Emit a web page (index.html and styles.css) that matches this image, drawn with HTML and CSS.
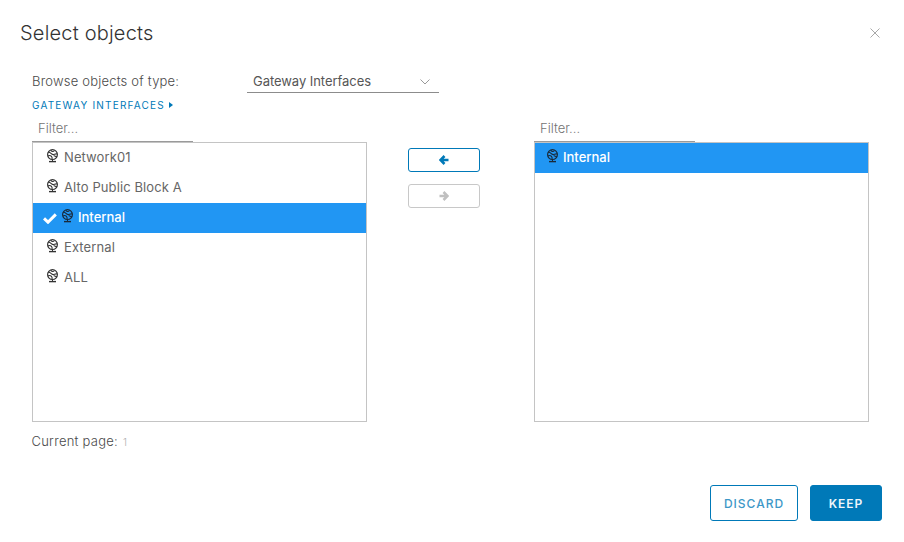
FILE: index.html
```html
<!DOCTYPE html>
<html lang="en">
<head>
<meta charset="utf-8">
<title>Select objects</title>
<link rel="stylesheet" href="styles.css">
</head>
<body>
<svg class="defs" width="0" height="0" aria-hidden="true">
  <symbol id="globe" viewBox="0 0 13 14">
    <circle cx="6.5" cy="5.6" r="4.9" fill="none" stroke="currentColor" stroke-width="1.2"/>
    <path d="M2.2 3.4 C4.2 2.8 5 5 6.5 5.4 C8 5.8 9.4 4.4 11 5 M5 1 C5 3 7.6 3 8.4 1.4 M1.8 7 C4 5.8 5.6 7.2 6 8.4 C6.2 9.4 6 10 6 10.4 M7.6 6.4 L11 8" fill="none" stroke="currentColor" stroke-width="1.1"/>
    <path d="M3 12.6 H10" stroke="currentColor" stroke-width="1.4"/>
    <path d="M6.5 10.4 V12" stroke="currentColor" stroke-width="1"/>
  </symbol>
</svg>
<main class="dialog">
  <header class="dialog-head">
    <h1 class="title">Select objects</h1>
    <button class="close" aria-label="Close">
      <svg width="12" height="12" viewBox="0 0 12 12"><path d="M1.5 1.5 L10.5 10.5 M10.5 1.5 L1.5 10.5" stroke="currentColor" stroke-width="1" fill="none"/></svg>
    </button>
  </header>
  <section class="body">
    <div class="type-row">
      <span class="type-label">Browse objects of type:</span>
      <div class="select">
        <span>Gateway Interfaces</span>
        <svg width="10" height="6" viewBox="0 0 10 6"><path d="M0.5 0.5 L5 5 L9.5 0.5" stroke="currentColor" stroke-width="1" fill="none"/></svg>
      </div>
    </div>
    <div class="crumb">GATEWAY INTERFACES <span class="crumb-caret"></span></div>
    <div class="panes">
      <div class="pane">
        <div class="filter">Filter...</div>
        <ul class="list">
          <li class="item"><svg class="globe"><use href="#globe"/></svg>Network01</li>
          <li class="item"><svg class="globe"><use href="#globe"/></svg>Alto Public Block A</li>
          <li class="item selected">
            <svg class="check" width="14" height="11" viewBox="0 0 14 11"><path d="M1 5.4 L5 9.2 L12.8 1.4" stroke="currentColor" stroke-width="3" fill="none"/></svg>
            <svg class="globe"><use href="#globe"/></svg>Internal</li>
          <li class="item"><svg class="globe"><use href="#globe"/></svg>External</li>
          <li class="item"><svg class="globe"><use href="#globe"/></svg>ALL</li>
        </ul>
      </div>
      <div class="moves">
        <button class="move active" aria-label="Add">
          <svg width="10" height="10" viewBox="0 0 10 10"><path d="M9.5 5 H2.5 M5.5 1 L1.5 5 L5.5 9" stroke="currentColor" stroke-width="2.6" fill="none"/></svg>
        </button>
        <button class="move" aria-label="Remove">
          <svg width="10" height="10" viewBox="0 0 10 10"><path d="M0.5 5 H7.5 M4.5 1 L8.5 5 L4.5 9" stroke="currentColor" stroke-width="2.6" fill="none"/></svg>
        </button>
      </div>
      <div class="pane">
        <div class="filter">Filter...</div>
        <ul class="list">
          <li class="item selected right"><svg class="globe"><use href="#globe"/></svg>Internal</li>
        </ul>
      </div>
    </div>
    <p class="page">Current page: <span class="page-num">1</span></p>
  </section>
  <footer class="actions">
    <button class="btn outline">DISCARD</button>
    <button class="btn solid">KEEP</button>
  </footer>
</main>
</body>
</html>
```
FILE: styles.css
```css
* { box-sizing: border-box; }
html, body { margin: 0; padding: 0; background: #fff; }
body {
  font-family: Inter, "Liberation Sans", sans-serif;
  color: #616161;
  font-size: 13px;
  width: 904px;
  height: 542px;
  overflow: hidden;
}
.defs { position: absolute; }
.dialog { display: flex; flex-direction: column; height: 542px; }
.dialog-head {
  display: flex;
  justify-content: space-between;
  align-items: center;
  height: 34px;
  margin-top: 16px;
  padding: 0 23px 0 20px;
}
.title { margin: 0; font-size: 20px; font-weight: 300; color: #333; letter-spacing: 0.2px; line-height: 34px; }
.close { border: 0; background: none; padding: 0; color: #a8a8a8; display: flex; }
.body { padding: 0 35px 0 32px; display: flex; flex-direction: column; }
.type-row { display: flex; align-items: center; margin-top: 21px; height: 22px; }
.type-label { width: 215px; font-size: 13px; font-weight: 300; letter-spacing: 0.2px; color: #4a4a4a; transform: translateY(-1px); }
.select {
  width: 192px;
  height: 22px;
  padding: 0 9px 0 6px;
  border-bottom: 1px solid #8c8c8c;
  display: flex;
  justify-content: space-between;
  align-items: center;
  color: #565656;
  letter-spacing: -0.05px;
}
.select span { transform: translateY(-1px); }
.select svg { color: #9a9a9a; }
.crumb {
  margin-top: 5px;
  font-size: 10px;
  height: 14px;
  line-height: 14px;
  letter-spacing: 1.2px;
  color: #0079b8;
  display: flex;
  align-items: center;
  gap: 4px;
}
.crumb-caret {
  border-left: 4px solid #0079b8;
  border-top: 3.5px solid transparent;
  border-bottom: 3.5px solid transparent;
}
.panes { display: flex; margin-top: 5px; }
.pane { width: 335px; display: flex; flex-direction: column; }
.filter {
  width: 161px;
  height: 25px;
  padding: 3px 0 0 6px;
  border-bottom: 1px solid #9a9a9a;
  color: #737373;
  font-size: 13px;
  font-weight: 300;
}
.list {
  list-style: none;
  margin: 0;
  padding: 0;
  height: 280px;
  border: 1px solid #c4c4c4;
}
.item {
  height: 30px;
  display: flex;
  align-items: center;
  padding-left: 13px;
  padding-bottom: 2px;
  font-size: 13px;
  letter-spacing: 0.1px;
  color: #666;
}
.globe { width: 13px; height: 14px; margin-right: 5px; color: #333; transform: translateY(-1px); }
.selected { background: #2196f3; color: #fff; font-weight: 500; letter-spacing: 0; padding-left: 10px; }
.selected .globe { margin-left: 4px; margin-right: 4px; color: #1a2a3a; }
.selected.right { padding-left: 7px; }
.check { color: #fff; transform: translateY(1px); }
.moves { width: 167px; display: flex; flex-direction: column; gap: 12px; padding: 31px 0 0 41px; }
.move {
  width: 72px;
  height: 24px;
  padding: 0;
  background: #fff;
  border: 1px solid #c8c8c8;
  border-radius: 3px;
  color: #c0c0c0;
  display: flex;
  align-items: center;
  justify-content: center;
}
.move.active { border-color: #0079b8; color: #0079b8; }
.page { margin: 11px 0 0; font-size: 13px; font-weight: 300; letter-spacing: 0.25px; color: #4a4a4a; height: 16px; line-height: 16px; transform: translateX(-0.5px); }
.page-num { font-size: 10px; color: #b0b0b0; margin-left: 1px; }
.actions { display: flex; justify-content: flex-end; gap: 12px; padding: 36px 22px 0 0; }
.btn {
  height: 36px;
  border-radius: 3px;
  border: 1px solid #0079b8;
  font-family: inherit;
  font-size: 12px;
  font-weight: 600;
  letter-spacing: 1px;
  padding: 0;
}
.outline { width: 88px; background: #fff; color: #3d97c7; font-weight: 500; }
.solid { width: 72px; background: #0079b8; color: #eef6fb; }
```
